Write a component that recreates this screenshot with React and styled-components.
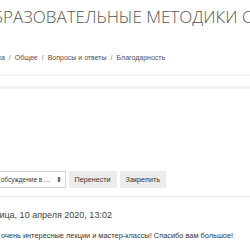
import React from 'react'
import styled, {createGlobalStyle} from 'styled-components'

const Global = createGlobalStyle`
  html, body {
    margin: 0;
    padding: 0;
    background: #fff;
  }
  body {
    width: 250px;
    height: 250px;
    overflow: hidden;
    font-family: "Liberation Sans", Arial, sans-serif;
    color: #373a3c;
  }
`

const Page = styled.div`
  width: 250px;
  height: 250px;
  overflow: hidden;
`

const Shift = styled.div`
  margin-left: ${props => props.shift}px;
  width: 600px;
`

const Title = styled.h1`
  margin: 0;
  padding-top: 5px;
  height: 24px;
  font-family: "Open Sans", "Noto Sans", sans-serif;
  font-size: 17px;
  font-weight: 300;
  color: #555;
  white-space: nowrap;
`

const Crumbs = styled.nav`
  display: flex;
  gap: 3px;
  margin-top: 25px;
  font-size: 7px;
  color: #5b4a4a;
  white-space: nowrap;
`

const Sep = styled.span`
  color: #777;
  padding: 0 1px;
`

const Band = styled.div`
  margin-top: 13px;
  height: 10px;
  border-top: 2px solid #f6f6f6;
  border-bottom: 3px solid #f2f2f2;
`

const ToolRow = styled.div`
  margin-top: 82px;
  padding-bottom: 8px;
  border-bottom: 1px solid #e6e6e6;
`

const Toolbar = styled.div`
  display: flex;
  align-items: center;
  justify-content: flex-end;
  gap: 3px;
  width: 166px;
`

const Select = styled.div`
  flex: none;
  display: flex;
  align-items: center;
  gap: 6px;
  height: 17px;
  padding: 0 3px 0 6px;
  border: 1px solid #ced4da;
  box-sizing: border-box;
  font-size: 6.5px;
  color: #373a3c;
  white-space: nowrap;
`

const Arrow = styled.span`
  font-size: 7px;
  color: #555;
`

const Button = styled.div`
  flex: none;
  height: 17px;
  padding: 0 6px;
  display: flex;
  align-items: center;
  background: #ececec;
  font-size: 7.2px;
  color: #333;
`

const Meta = styled.div`
  margin-top: 13px;
  font-size: 9px;
  color: #444;
  white-space: nowrap;
`

const Message = styled.p`
  margin: 11px 0 0;
  font-size: 7.4px;
  color: #333;
  white-space: nowrap;
`

export default function App() {
  return (
    <Page>
      <Global />
      <Shift shift={-20}>
        <Title>ОБРАЗОВАТЕЛЬНЫЕ МЕТОДИКИ ОБУЧЕНИЯ</Title>
      </Shift>
      <Shift shift={-17}>
        <Crumbs>
          <span>Форма</span>
          <Sep>/</Sep>
          <span>Общее</span>
          <Sep>/</Sep>
          <span>Вопросы и ответы</span>
          <Sep>/</Sep>
          <span>Благодарность</span>
        </Crumbs>
      </Shift>
      <Band />
      <ToolRow>
        <Toolbar>
          <Select>
            <span>Переместить обсуждение в ...</span>
            <Arrow>⬍</Arrow>
          </Select>
          <Button>Перенести</Button>
          <Button>Закрепить</Button>
        </Toolbar>
      </ToolRow>
      <Shift shift={-21}>
        <Meta>Пятница, 10 апреля 2020, 13:02</Meta>
      </Shift>
      <Shift shift={1}>
        <Message>очень интересные лекции и мастер-классы! Спасибо вам большое!</Message>
      </Shift>
    </Page>
  )
}
